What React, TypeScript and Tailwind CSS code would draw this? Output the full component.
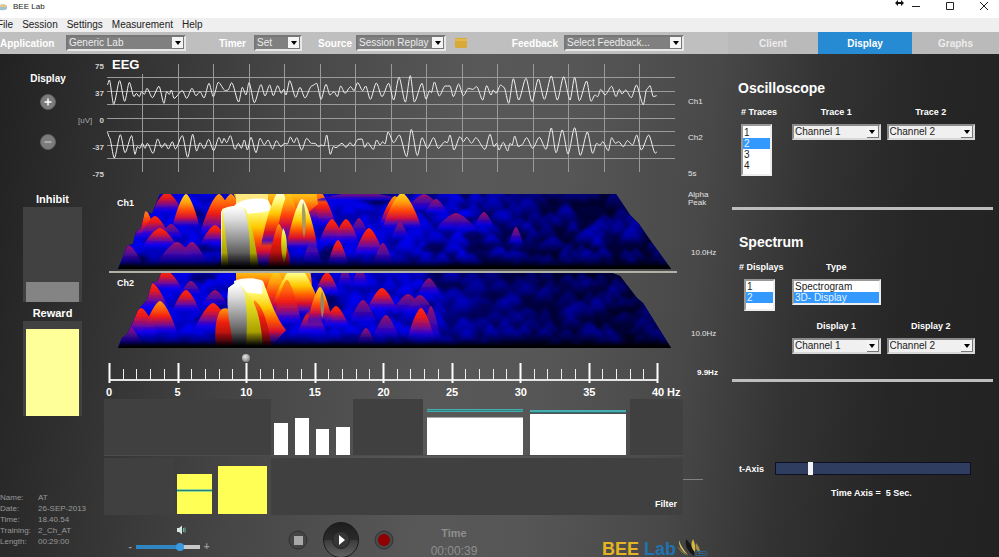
import { useState } from 'react';
import type { ReactNode } from 'react';

// turning points of the two EEG traces, x/y pairs in thirds of a pixel
const TRACE_1 = [
  322, 255, 328, 240, 341, 313, 359, 242, 374, 304, 388, 247, 402, 290, 409, 280, 418, 290, 425, 275, 433, 283, 441, 265,
  457, 293, 477, 259, 492, 310, 500, 275, 508, 283, 514, 270, 522, 295, 547, 272, 560, 295, 576, 265, 588, 287, 600, 275,
  612, 294, 627, 250, 640, 290, 655, 247, 676, 272, 684, 270, 695, 248, 716, 306, 727, 262, 738, 285, 747, 248, 763, 308,
  783, 254, 795, 288, 809, 255, 820, 287, 833, 257, 844, 280, 851, 268, 858, 285, 869, 242, 887, 292, 900, 262, 915, 294,
  935, 258, 950, 250, 963, 298, 978, 253, 990, 285, 1002, 275, 1012, 290, 1022, 258, 1035, 280, 1052, 260, 1062, 272,
  1073, 248, 1088, 272, 1097, 258, 1111, 298, 1129, 249, 1146, 290, 1166, 250, 1181, 300, 1197, 232, 1216, 306, 1231, 227,
  1243, 306, 1266, 250, 1278, 298, 1289, 272, 1294, 278, 1303, 246, 1318, 288, 1335, 258, 1350, 258, 1360, 290, 1376, 252,
  1390, 287, 1405, 265, 1418, 268, 1430, 260, 1448, 300, 1460, 257, 1473, 285, 1480, 270, 1488, 280, 1502, 255, 1512, 262,
  1526, 310, 1540, 236, 1556, 300, 1578, 235, 1596, 305, 1615, 237, 1633, 298, 1654, 228, 1672, 300, 1691, 230, 1710, 300,
  1724, 232, 1738, 302, 1760, 243, 1773, 304, 1785, 285, 1793, 290, 1802, 268, 1815, 285, 1835, 259, 1848, 290, 1858, 268,
  1866, 282, 1877, 270, 1894, 293, 1909, 255, 1930, 314, 1940, 268, 1950, 257, 1960, 290, 1970, 287,
];

const TRACE_2 = [
  322, 397, 328, 412, 343, 474, 361, 404, 375, 458, 395, 407, 405, 463, 412, 440, 420, 445, 427, 430, 435, 445, 442, 430,
  459, 460, 473, 417, 485, 443, 495, 430, 505, 447, 517, 425, 526, 447, 547, 407, 563, 472, 578, 403, 590, 453, 600, 428,
  612, 446, 626, 418, 641, 452, 657, 412, 666, 430, 672, 415, 680, 428, 691, 407, 705, 448, 715, 430, 724, 445, 733, 420,
  742, 450, 753, 412, 768, 458, 780, 415, 793, 435, 804, 420, 818, 447, 829, 422, 843, 440, 853, 430, 862, 432, 871, 411,
  882, 428, 890, 413, 905, 450, 920, 415, 934, 430, 945, 430, 955, 440, 965, 435, 972, 438, 980, 405, 991, 463, 1000, 440,
  1008, 443, 1026, 430, 1038, 442, 1050, 428, 1060, 438, 1074, 418, 1086, 417, 1094, 442, 1103, 428, 1120, 448, 1130, 420,
  1140, 435, 1148, 425, 1155, 432, 1164, 396, 1181, 428, 1198, 405, 1220, 470, 1234, 388, 1252, 467, 1266, 413, 1282, 445,
  1301, 413, 1315, 445, 1335, 425, 1342, 428, 1350, 405, 1362, 450, 1380, 410, 1390, 425, 1400, 412, 1415, 430, 1427, 413,
  1455, 448, 1470, 403, 1482, 440, 1490, 430, 1497, 450, 1510, 427, 1523, 453, 1530, 430, 1536, 436, 1544, 408, 1555, 440,
  1565, 435, 1580, 413, 1598, 445, 1618, 412, 1638, 448, 1654, 384, 1668, 458, 1687, 390, 1704, 462, 1724, 383, 1741, 466,
  1762, 396, 1778, 460, 1790, 430, 1800, 436, 1808, 425, 1825, 452, 1835, 413, 1846, 430, 1856, 425, 1870, 440, 1882, 422,
  1898, 435, 1910, 405, 1924, 450, 1946, 405, 1966, 460, 1971, 455,
];

function tracePath(pts: number[]) {
  let d = `M${pts[0] / 3} ${pts[1] / 3}`;
  for (let i = 2; i < pts.length; i += 2) {
    const x0 = pts[i - 2] / 3;
    const x1 = pts[i] / 3;
    const pull = (x1 - x0) * 0.28;
    d += `C${x0 + pull} ${pts[i - 1] / 3} ${x1 - pull} ${pts[i + 1] / 3} ${x1} ${pts[i + 1] / 3}`;
  }
  return d;
}

// [x, top, base, half width, heat]
type Peak = [number, number, number, number, 'purple' | 'red' | 'orange' | 'yellow' | 'white'];

const PEAKS_1: Peak[] = [
  [167, 192, 216, 17, 'red'],
  [318, 190, 229, 19, 'orange'],
  [306, 190, 225, 14, 'orange'],
  [424, 194, 213, 20, 'purple'],
  [436, 199, 215, 12, 'purple'],
  [360, 192, 202, 50, 'purple'],
  [395, 196, 228, 16, 'orange'],
  [402, 193, 230, 20, 'yellow'],
  [186, 194, 229, 14, 'yellow'],
  [219, 194, 238, 20, 'orange'],
  [231, 194, 238, 20, 'orange'],
  [171, 224, 240, 13, 'purple'],
  [456, 213, 232, 22, 'purple'],
  [484, 212, 228, 10, 'purple'],
  [359, 218, 238, 10, 'purple'],
  [145, 209, 242, 12, 'orange'],
  [155, 216, 240, 16, 'red'],
  [332, 219, 247, 14, 'red'],
  [346, 219, 247, 14, 'red'],
  [400, 222, 240, 9, 'purple'],
  [516, 227, 245, 7, 'purple'],
  [215, 225, 248, 16, 'red'],
  [160, 228, 250, 19, 'red'],
  [369, 228, 260, 16, 'red'],
  [312, 239, 266, 10, 'purple'],
  [338, 240, 268, 11, 'red'],
  [383, 243, 268, 11, 'purple'],
  [128, 245, 268, 16, 'purple'],
  [177, 242, 268, 22, 'purple'],
  [192, 242, 266, 16, 'purple'],
];

const PEAKS_2: Peak[] = [
  [166, 270, 294, 18, 'red'],
  [327, 272, 297, 13, 'red'],
  [345, 268, 288, 8, 'purple'],
  [360, 268, 288, 9, 'purple'],
  [429, 278, 297, 12, 'purple'],
  [152, 283, 314, 18, 'red'],
  [191, 281, 297, 12, 'purple'],
  [186, 290, 315, 15, 'red'],
  [215, 290, 308, 14, 'purple'],
  [382, 288, 315, 17, 'red'],
  [408, 294, 316, 18, 'purple'],
  [420, 295, 316, 16, 'purple'],
  [363, 300, 325, 14, 'purple'],
  [141, 308, 340, 18, 'red'],
  [160, 301, 336, 18, 'orange'],
  [213, 303, 334, 20, 'red'],
  [336, 306, 330, 14, 'red'],
  [312, 308, 338, 16, 'red'],
  [386, 315, 342, 14, 'purple'],
  [431, 306, 344, 10, 'purple'],
  [421, 308, 345, 15, 'red'],
  [366, 328, 347, 10, 'purple'],
  [128, 325, 350, 16, 'purple'],
];

const EDGE_1 = '118,269 121,262 127,246 133,244 136,232 141,228 145,211 152,214 160,194 616,194 630,215 639,224 650,240 671,269';
const EDGE_2 = '118,348 122,338 127,334 133,322 138,310 147,300 152,283 158,281 161,273 612,273 620,276 637,298 643,303 671,348';

function bell(x: number, top: number, base: number, w: number) {
  const knee = base - (base - top) * 0.5;
  return `M${x - w} ${base}C${x - w * 0.75} ${knee} ${x - w * 0.22} ${top} ${x} ${top}C${x + w * 0.22} ${top} ${x + w * 0.75} ${knee} ${x + w} ${base}Z`;
}

// low activity swell, brighter at the low frequencies
function swell(top: number, seed: number, limit: number, floor: number) {
  let s = seed;
  const rnd = () => {
    s = (s * 16807) % 2147483647;
    return s / 2147483647;
  };
  const out: { x: number; y: number; w: number; h: number; o: number; dark: boolean }[] = [];
  for (let row = 0; row < 8; row++) {
    const y = top + row * 10 - 3;
    for (let x = 108; x < 672; x += 18) {
      const fade = x < limit ? 1 : Math.max(floor, 1 - (x - limit) / 110);
      out.push({
        x: x + rnd() * 16,
        y: y + rnd() * 9 - 4,
        w: 10 + rnd() * 9,
        h: 14 + rnd() * 12,
        o: fade * (0.7 + rnd() * 0.3),
        dark: rnd() < (x < limit ? 0.1 : 0.25),
      });
    }
  }
  return out;
}

function Surface({ id, edge, top, peaks, seed, limit, floor, children }: {
  id: string;
  edge: string;
  top: number;
  peaks: Peak[];
  seed: number;
  limit: number;
  floor: number;
  children: ReactNode;
}) {
  return (
    <g clipPath={`url(#${id})`}>
      <clipPath id={id}>
        <polygon points={edge} />
      </clipPath>
      <rect x="110" y={top} width="570" height="76" fill="#000058" />
      <rect x="110" y={top} width="570" height="76" fill="url(#dusk)" />
      <g filter="url(#soft)">
        {swell(top, seed, limit, floor).map((b, i) =>
          b.dark ? (
            <ellipse key={i} cx={b.x} cy={b.y + 8} rx={b.w * 0.8} ry="5" fill="#000040" opacity="0.6" />
          ) : (
            <path key={i} d={bell(b.x, b.y, b.y + b.h, b.w)} fill="url(#h-blue)" opacity={b.o} />
          )
        )}
      </g>
      <g filter="url(#edge)">
        {peaks.map(([x, t, b, w, heat]) => (
          <path key={`${x}-${t}`} d={bell(x, t, b, w)} fill={FILLS[heat]} />
        ))}
        {children}
      </g>
      <rect x="110" y={top + 60} width="570" height="16" fill="url(#floor)" />
    </g>
  );
}

const FILLS = {
  purple: 'url(#h-purple)',
  red: 'url(#h-red)',
  orange: 'url(#h-orange)',
  yellow: 'url(#h-yellow)',
  white: 'url(#h-white)',
};

const HEAT: [string, [string, string, number][]][] = [
  ['h-blue', [['0%', '#0808fa', 1], ['45%', '#0000e4', 0.95], ['75%', '#0000a0', 0.6], ['100%', '#000060', 0]]],
  ['h-purple', [['0%', '#9c1468', 1], ['40%', '#5a0a96', 0.9], ['75%', '#1400e6', 0.7], ['100%', '#0000e0', 0]]],
  ['h-red', [['0%', '#ff2a10', 1], ['25%', '#e81a1a', 1], ['50%', '#8c0c80', 0.95], ['75%', '#1800f0', 0.8], ['100%', '#0000e0', 0]]],
  ['h-orange', [['0%', '#ff9a10', 1], ['24%', '#ff5a08', 1], ['45%', '#f01c14', 1], ['66%', '#8c0c80', 0.95], ['84%', '#1800f0', 0.75], ['100%', '#0000e0', 0]]],
  ['h-yellow', [['0%', '#ffd820', 1], ['25%', '#ffa00a', 1], ['48%', '#ff4408', 1], ['68%', '#d01040', 1], ['85%', '#4008c0', 0.8], ['100%', '#0000e0', 0]]],
  ['h-white', [['0%', '#ffffff', 1], ['22%', '#fff870', 1], ['42%', '#ffc800', 1], ['60%', '#ff5a00', 1], ['76%', '#d8102c', 1], ['90%', '#4008c8', 0.9], ['100%', '#0000e0', 0]]],
];

function Spectra() {
  return (
    <svg viewBox="104 188 584 162" preserveAspectRatio="none" className="block h-[162px] w-full" aria-label="3D spectrum">
      <defs>
        {HEAT.map(([id, stops]) => (
          <linearGradient key={id} id={id} x1="0" y1="0" x2="0" y2="1">
            {stops.map(([offset, color, alpha]) => (
              <stop key={offset} offset={offset} stopColor={color} stopOpacity={alpha} />
            ))}
          </linearGradient>
        ))}
        <linearGradient id="dusk" x1="0" y1="0" x2="1" y2="0">
          <stop offset="0" stopColor="#0000d4" />
          <stop offset="0.45" stopColor="#0000c4" stopOpacity="0.9" />
          <stop offset="0.75" stopColor="#000028" stopOpacity="0.7" />
          <stop offset="1" stopColor="#000010" />
        </linearGradient>
        <linearGradient id="floor" x1="0" y1="0" x2="0" y2="1">
          <stop offset="0" stopColor="#000010" stopOpacity="0" />
          <stop offset="0.5" stopColor="#000010" stopOpacity="0.4" />
          <stop offset="0.9" stopColor="#000" />
        </linearGradient>
        <linearGradient id="tower" x1="0" y1="0" x2="0" y2="1">
          <stop offset="0" stopColor="#fff" />
          <stop offset="0.2" stopColor="#dcdcdc" />
          <stop offset="0.55" stopColor="#8c8c8c" />
          <stop offset="1" stopColor="#1c1c1c" />
        </linearGradient>
        <linearGradient id="flank" x1="0" y1="0" x2="0" y2="1">
          <stop offset="0" stopColor="#fff8b0" />
          <stop offset="0.3" stopColor="#e8e020" />
          <stop offset="0.75" stopColor="#a8a000" />
          <stop offset="1" stopColor="#383400" />
        </linearGradient>
        <linearGradient id="ember" x1="0" y1="0" x2="0" y2="1">
          <stop offset="0" stopColor="#ff9a10" />
          <stop offset="0.35" stopColor="#f02010" />
          <stop offset="1" stopColor="#700010" />
        </linearGradient>
        <filter id="soft">
          <feGaussianBlur stdDeviation="1.5" />
        </filter>
        <filter id="edge">
          <feGaussianBlur stdDeviation="0.7" />
        </filter>
      </defs>

      <Surface id="surface1" edge={EDGE_1} top={193} peaks={PEAKS_1} seed={71} limit={450} floor={0.5}>
        <path d="M232 190H316L318 204L302 218L290 206L284 232L262 222L238 204Z" fill="url(#h-yellow)" />
        <path d="M240 199C252 197 262 197 268 200C274 212 284 226 292 268H244Z" fill="url(#h-white)" />
        <path d="M236 190H268V204L236 206Z" fill="#ffe880" />
        <path d={bell(280, 190, 246, 19)} fill="url(#h-white)" />
        <path d={bell(289, 192, 240, 13)} fill="url(#h-yellow)" />
        <path d={bell(302, 199, 250, 16)} fill="url(#h-white)" />
        <path d="M303 202C307 212 306 228 304 238C302 226 301 212 303 202Z" fill="#a89a60" />
        <path d={bell(279, 224, 268, 11)} fill="url(#ember)" />
        <path d="M283 228C288 236 288 252 284 264C281 254 280 240 283 228Z" fill="url(#flank)" />
        <path d="M221 269V212C222 208 230 206 234 206C240 198 262 197 268 200L270 210C262 214 254 212 248 214Z" fill="#fff" />
        <path d="M221 269L222 209C230 206 240 206 246 209C252 226 256 246 259 269Z" fill="url(#flank)" />
        <path d="M229 269L223 210C230 206 238 206 244 209C250 226 250 246 250 269Z" fill="url(#tower)" />
      </Surface>

      <Surface id="surface2" edge={EDGE_2} top={272} peaks={PEAKS_2} seed={1234} limit={410} floor={0.36}>
        <path d="M236 268H310L312 284L296 304L282 296L264 290L236 284Z" fill="url(#h-yellow)" />
        <path d={bell(276, 270, 318, 17)} fill="url(#h-yellow)" />
        <path d={bell(296, 264, 316, 27)} fill="url(#h-white)" />
        <path d={bell(287, 280, 328, 15)} fill="url(#h-orange)" />
        <path d={bell(320, 287, 325, 13)} fill="url(#h-yellow)" />
        <path d="M322 291C325 300 325 310 322 318C320 308 320 298 322 291Z" fill="#9a8460" />
        <path d="M234 281C244 277 258 278 263 281C270 300 276 318 286 330L270 348H240Z" fill="url(#h-white)" />
        <path d="M216 348C214 330 216 314 222 309C226 307 230 309 230 312L236 348Z" fill="url(#ember)" />
        <path d="M254 300C264 306 268 326 272 348H250Z" fill="url(#ember)" />
        <path d="M228 290C232 282 244 278 262 281L262 294L244 292Z" fill="#fff" />
        <path d="M234 348L228 288C234 283 242 283 246 292C256 302 261 318 263 348Z" fill="url(#flank)" />
        <path d="M234 348C230 326 226 308 228 290C232 282 240 282 244 292C248 310 247 330 246 348Z" fill="url(#tower)" />
      </Surface>

      <rect x="109" y="271" width="568" height="2" fill="#b0b2a8" />
    </svg>
  );
}

function Oscillogram() {
  const rows = [77, 91, 104, 118, 131, 145, 158];
  const cols = Array.from({ length: 15 }, (_, i) => 142 + Math.round(i * 35.5));
  return (
    <svg viewBox="104 54 584 134" preserveAspectRatio="none" className="block h-[134px] w-full" aria-label="EEG traces">
      {rows.map((y) => (
        <rect key={y} x="107" y={y} width="568" height="1" fill="#9a9a9a" />
      ))}
      {cols.map((x, i) => (
        <rect key={x} x={x} y={i === 0 ? 74 : 64} width="1" height={i === 0 ? 98 : 108} fill="#9a9a9a" />
      ))}
      <path d={tracePath(TRACE_1)} fill="none" stroke="#f2f2f2" />
      <path d={tracePath(TRACE_2)} fill="none" stroke="#f2f2f2" />
    </svg>
  );
}

function Ruler() {
  return (
    <svg viewBox="109 350 549 36" preserveAspectRatio="none" className="block h-[36px] w-full overflow-visible" aria-hidden="true">
      <defs>
        <radialGradient id="ball" cx="0.4" cy="0.35" r="0.6">
          <stop offset="0" stopColor="#e8e8e8" />
          <stop offset="1" stopColor="#8a8a8a" />
        </radialGradient>
      </defs>
      <rect x="109" y="379" width="549" height="2" fill="#e4e4e4" />
      {Array.from({ length: 41 }, (_, i) => {
        const x = 109 + Math.round(i * 13.7);
        return i % 5 === 0 ? (
          <rect key={i} x={x - 0.5} y="363" width="2" height="20" fill="#fff" />
        ) : (
          <rect key={i} x={x} y="369" width="1" height="11" fill="#f0f0f0" />
        );
      })}
      <circle cx="246" cy="358" r="4" fill="url(#ball)" />
    </svg>
  );
}

function DropDown({ label, value, dark, className }: { label: string; value: string; dark?: boolean; className: string }) {
  return (
    <div className={`relative h-4 shrink-0 ${className}`}>
      <select
        aria-label={label}
        defaultValue={value}
        className={`block h-full w-full appearance-none border-2 pr-3 pl-px text-[10px] leading-3 outline-none ${
          dark
            ? 'border-t-[#777] border-r-[#e8e8e8] border-b-[#e8e8e8] border-l-[#777] bg-[#808080] text-[#ececec]'
            : 'border-t-[#8a8a8a] border-r-[#d8d8d8] border-b-[#d8d8d8] border-l-[#8a8a8a] bg-[#f0f0f0] text-[#222]'
        }`}
      >
        <option>{value}</option>
      </select>
      <span className="pointer-events-none absolute top-0.5 right-0.5 flex h-3 w-3 items-center justify-center border-r border-b border-[#777] bg-[#f4f4f4]">
        <svg viewBox="0 0 6 4" className="h-1 w-1.5">
          <path d="M0 0H6L3 4Z" fill="#000" />
        </svg>
      </span>
    </div>
  );
}

function ListBox({ label, options, value, className }: { label: string; options: string[]; value: string; className: string }) {
  return (
    <select
      aria-label={label}
      size={options.length}
      defaultValue={value}
      className={`block overflow-hidden border-2 border-t-[#999] border-r-[#eee] border-b-[#eee] border-l-[#999] bg-white bg-none p-0 text-[10px] text-[#222] outline-none ${className}`}
    >
      {options.map((o) => (
        <option
          key={o}
          className="h-[11px] min-h-0 p-0 pl-px leading-[11px] checked:bg-[linear-gradient(#3399ff,#3399ff)] checked:[-webkit-text-fill-color:#e8f4ff]"
        >
          {o}
        </option>
      ))}
    </select>
  );
}

function Level({ label, fill }: { label: string; fill: string }) {
  return (
    <section className="pt-1">
      <h2 className="text-center text-[11px] leading-[15px] font-bold">{label}</h2>
      <div className="flex h-[95px] items-end bg-[#414141] px-[3px]">
        <div className={`w-full ${fill}`} />
      </div>
    </section>
  );
}

function TitleBar() {
  return (
    <header className="flex h-[18px] items-start justify-between bg-white text-[#222]">
      <div className="flex items-center">
        <svg viewBox="0 0 8 8" className="h-2 w-2" aria-hidden="true">
          <path d="M0 2Q4 0 7 3V6Q4 8 0 7Z" fill="#9fc3cf" />
          <path d="M0 2Q4 0 7 3L6 4H0Z" fill="#e6c78a" />
        </svg>
        <h1 className="pl-[5px] text-[8px] leading-[13px]">BEE Lab</h1>
      </div>
      <div className="flex items-start">
        <svg viewBox="0 0 9 6" className="mr-[7px] h-1.5 w-[9px]" aria-hidden="true">
          <path d="M0 3L3 0V2H6V0L9 3L6 6V4H3V6Z" fill="#111" />
        </svg>
        <button type="button" aria-label="Minimize" className="mr-6 flex h-3 w-2.5 items-center">
          <svg viewBox="0 0 10 12" className="h-3 w-2.5"><path d="M1 6.500H9" stroke="#222" /></svg>
        </button>
        <button type="button" aria-label="Maximize" className="mr-6 flex h-3 w-2.5 items-center">
          <svg viewBox="0 0 10 12" className="h-3 w-2.5"><path d="M1.500 2.500H8.500V9.500H1.500Z" fill="none" stroke="#222" /></svg>
        </button>
        <button type="button" aria-label="Close" className="mr-2.5 flex h-3 w-2.5 items-center">
          <svg viewBox="0 0 10 12" className="h-3 w-2.5"><path d="M1 2L9 10M9 2L1 10" stroke="#222" /></svg>
        </button>
      </div>
    </header>
  );
}

function Toolbar() {
  const [tab, setTab] = useState('Display');
  return (
    <div className="flex h-[22px] bg-[#bfbfbf] text-[10px] font-bold text-white">
      <div className="flex min-w-0 flex-1 items-center">
        <span className="w-[66px] shrink-0">Application</span>
        <DropDown dark label="Application" value="Generic Lab" className="w-[120px] font-normal" />
        <span className="w-[68px] shrink-0 pr-2 text-right">Timer</span>
        <DropDown dark label="Timer" value="Set" className="w-12 font-normal" />
        <span className="w-[54px] shrink-0 pr-1 text-right">Source</span>
        <DropDown dark label="Source" value="Session Replay" className="w-[90px] font-normal" />
        <button type="button" aria-label="Open file" className="ml-2 shrink-0">
          <svg viewBox="0 0 14 12" className="h-3 w-3.5">
            <path d="M1 2Q1 1 2 1H12Q13 1 13 2V10Q13 11 12 11H2Q1 11 1 10Z" fill="#d9a93a" />
            <path d="M1 3H13" stroke="#edc766" />
          </svg>
        </button>
        <span className="w-[96px] shrink-0 pr-1.5 text-right">Feedback</span>
        <DropDown dark label="Feedback" value="Select Feedback..." className="w-[120px] font-normal" />
      </div>
      <div className="grid w-[271px] shrink-0 grid-cols-[90px_94px_1fr] bg-[#bababa]">
        {['Client', 'Display', 'Graphs'].map((t) => (
          <button
            key={t}
            type="button"
            onClick={() => setTab(t)}
            className={tab === t ? 'bg-[#268bd2] text-white' : 'text-[#ececec]'}
          >
            {t}
          </button>
        ))}
      </div>
    </div>
  );
}

function Filters() {
  return (
    <div className="flex flex-col gap-0.5 pt-px">
      <div className="grid h-[57px] grid-cols-[167fr_82fr_70fr_207fr_53fr] border-b border-[#4c4c4c]">
        <div className="bg-[#404040]" />
        <div className="flex items-end gap-[7px] px-[3px]">
          <div className="h-8 flex-1 bg-white" />
          <div className="h-[37px] flex-1 bg-white" />
          <div className="h-[26px] flex-1 bg-white" />
          <div className="h-7 flex-1 bg-white" />
        </div>
        <div className="bg-[#404040]" />
        <div className="flex items-end gap-[7px] px-1">
          <div className="flex-1">
            <div className="mb-[5px] h-[3px] border-y border-[#46aeae] bg-[#2f7f7f]" />
            <div className="h-[38px] border-t border-[#aaa] bg-white" />
          </div>
          <div className="flex-1">
            <div className="mb-px h-[3px] border-t-2 border-[#46aeae] bg-[#2f6f6f]" />
            <div className="h-[41px] bg-white" />
          </div>
        </div>
        <div className="bg-[#404040]" />
      </div>
      <div className="grid h-[57px] grid-cols-[70fr_97fr_412fr]">
        <div className="bg-[#404040]" />
        <div className="flex items-end gap-1.5 pr-1 pb-px pl-[3px]">
          <div className="h-10 flex-[35] bg-[#ffff55] pt-[15px]">
            <div className="h-[3px] border-y border-[#8fd890] bg-[#2a8078]" />
          </div>
          <div className="h-12 flex-[49] bg-[#ffff55]" />
        </div>
        <div className="flex items-center justify-end bg-[#404040] pt-9 pr-1.5 text-[9px] font-bold">Filter</div>
      </div>
    </div>
  );
}

function Transport() {
  return (
    <footer className="flex h-[42px] items-start">
      <div className="flex w-[110px] flex-col items-center pt-2.5 pl-5">
        <svg viewBox="0 0 10 10" className="ml-6 h-2.5 w-2.5" aria-hidden="true">
          <path d="M1 3H3L6 0.500V9.500L3 7H1Z" fill="#d8e4dc" />
          <path d="M7.500 3V7M9 2.500V7.500" stroke="#6fb49c" />
        </svg>
        <div className="mt-1.5 flex items-center gap-1 text-[10px] leading-3 font-bold text-[#999]">
          <span>-</span>
          <input
            type="range"
            aria-label="Volume"
            defaultValue={72}
            className="h-1 w-16 appearance-none bg-[linear-gradient(90deg,#2f86c0_70%,#c8c8c8_70%)] [&::-webkit-slider-thumb]:size-2 [&::-webkit-slider-thumb]:appearance-none [&::-webkit-slider-thumb]:rounded-full [&::-webkit-slider-thumb]:bg-[#3a9ae0]"
          />
          <span>+</span>
        </div>
      </div>
      <div className="flex h-[50px] items-center gap-[14px] pl-[74px]">
        <button type="button" aria-label="Stop">
          <svg viewBox="0 0 20 20" className="h-5 w-5">
            <circle cx="10" cy="10" r="9" fill="#454545" stroke="#303030" />
            <rect x="6" y="6" width="9" height="9" fill="#a8a8a8" />
          </svg>
        </button>
        <button type="button" aria-label="Play">
          <svg viewBox="0 0 38 38" className="h-[38px] w-[38px]">
            <defs>
              <linearGradient id="knob" x1="0" y1="0" x2="0" y2="1">
                <stop offset="0" stopColor="#1c1c1c" />
                <stop offset="0.5" stopColor="#2c2c2c" />
                <stop offset="0.52" stopColor="#3e3e3e" />
                <stop offset="1" stopColor="#626262" />
              </linearGradient>
            </defs>
            <circle cx="19" cy="19" r="17.500" fill="url(#knob)" stroke="#1a1a1a" />
            <circle cx="19" cy="19" r="8.500" fill="#363636" stroke="#242424" />
            <path d="M17 14L23 19L17 24Z" fill="#fff" />
          </svg>
        </button>
        <button type="button" aria-label="Record">
          <svg viewBox="0 0 20 20" className="h-5 w-5">
            <circle cx="10" cy="10" r="9" fill="#484848" stroke="#343434" />
            <circle cx="10" cy="10" r="6" fill="#900000" />
          </svg>
        </button>
      </div>
      <div className="w-[120px] pt-[9px] text-center text-[#8e8e8e]">
        <p className="text-[11px] leading-[18px] font-bold">Time</p>
        <p className="text-[12px] leading-[18px]">00:00:39</p>
      </div>
      <div className="ml-auto flex pt-6 pr-5">
        <span className="text-[18px] leading-[20px] font-bold whitespace-nowrap text-[#e6b422]">
          BEE <span className="text-[#1f73b0]">Lab</span>
        </span>
        <svg viewBox="0 0 36 18" className="h-[18px] w-9" aria-hidden="true">
          <path d="M3 1Q2 10 12 16Q5 8 3 1Z" fill="#d8c060" />
          <path d="M1 6Q4 14 12 17Q4 11 1 6Z" fill="#8a8040" />
          <path d="M10 0Q8 10 18 17Q20 10 10 0Z" fill="#151515" />
          <path d="M17 0Q13 8 19 13Q20 6 17 0Z" fill="#d8b840" />
          <path d="M20 4Q18 10 24 14Q24 8 20 4Z" fill="#a09048" />
          <path d="M20 12.500H29Q31 12.500 31 14.500T29 16.500H20Z" fill="none" stroke="#2c6084" />
          <path d="M22 14.500H29" stroke="#2c6084" />
        </svg>
      </div>
    </footer>
  );
}

function Field({ label, children }: { label: string; children: ReactNode }) {
  return (
    <div>
      <div className="mb-1.5 text-center text-[9px] leading-3 font-bold whitespace-nowrap">{label}</div>
      {children}
    </div>
  );
}

function Settings() {
  return (
    <aside className="w-[267px] shrink-0 pr-1.5">
      <section className="h-[156px] border-b-[3px] border-[#bdbdbd] pt-6 pl-1.5">
        <h2 className="text-[14px] leading-5 font-bold">Oscilloscope</h2>
        <div className="flex gap-3 pt-2">
          <div className="w-[42px]">
            <Field label="# Traces">
              <ListBox label="Number of traces" options={['1', '2', '3', '4']} value="2" className="ml-[3px] h-[52px] w-[31px] pt-px" />
            </Field>
          </div>
          <div className="grid w-[183px] grid-cols-2 gap-1.5">
            <Field label="Trace 1">
              <DropDown label="Trace 1" value="Channel 1" className="w-full" />
            </Field>
            <Field label="Trace 2">
              <DropDown label="Trace 2" value="Channel 2" className="w-full" />
            </Field>
          </div>
        </div>
      </section>
      <section className="h-[172px] border-b-[3px] border-[#bdbdbd] pt-[22px] pl-[7px]">
        <h2 className="text-[14px] leading-5 font-bold">Spectrum</h2>
        <div className="flex gap-[11px] pt-[9px]">
          <div className="w-[42px]">
            <Field label="# Displays">
              <ListBox label="Number of displays" options={['1', '2']} value="2" className="ml-[5px] h-[32px] w-[31px]" />
            </Field>
          </div>
          <div className="grid w-[183px] grid-cols-2 gap-x-1.5 gap-y-[15px]">
            <Field label="Type">
              <ListBox label="Type" options={['Spectrogram', '3D- Display']} value="3D- Display" className="h-[26px] w-full" />
            </Field>
            <span />
            <Field label="Display 1">
              <DropDown label="Display 1" value="Channel 1" className="w-full" />
            </Field>
            <Field label="Display 2">
              <DropDown label="Display 2" value="Channel 2" className="w-full" />
            </Field>
          </div>
        </div>
      </section>
      <section className="pt-20 pl-[7px] text-[9px] leading-3 font-bold">
        <label className="flex items-center">
          <span className="w-9">t-Axis</span>
          <input
            type="range"
            defaultValue={17}
            className="h-[13px] w-[196px] appearance-none border border-[#0c1020] bg-[#2f3e60] [&::-webkit-slider-thumb]:h-[13px] [&::-webkit-slider-thumb]:w-[5px] [&::-webkit-slider-thumb]:appearance-none [&::-webkit-slider-thumb]:bg-[#f4f4f4]"
          />
        </label>
        <p className="pt-3 pl-[92px]">Time Axis =&nbsp; 5 Sec.</p>
      </section>
    </aside>
  );
}

const INFO = [
  ['Name:', 'AT'],
  ['Date:', '26-SEP-2013'],
  ['Time:', '18.40.54'],
  ['Training:', '2_Ch_AT'],
  ['Length:', '00:29:00'],
];

export default function App() {
  return (
    <div className="flex min-h-screen flex-col overflow-hidden bg-[#2a2a2a] font-['Liberation_Sans',Arial,sans-serif] text-white">
      <TitleBar />
      <nav className="-ml-[3px] flex h-[14px] items-center gap-[9px] bg-[#efefef] text-[10px] leading-none text-[#222]">
        {['File', 'Session', 'Settings', 'Measurement', 'Help'].map((m) => (
          <button key={m} type="button">{m}</button>
        ))}
      </nav>
      <Toolbar />
      <main className="flex flex-1 bg-[linear-gradient(97deg,#222222_0%,#2f2f2f_10%,#464646_27%,#585858_45%,#565656_55%,#484848_68%,#333333_78%,#262626_88%,#222222_100%)]">
        <div className="min-w-0 flex-1">
          <div className="flex">
            <div className="flex w-[76px] shrink-0 flex-col items-center pt-[18px] pl-[20px]">
              <h2 className="text-[10px] leading-[14px] font-bold">Display</h2>
              {['+', '-'].map((s) => (
                <button key={s} type="button" aria-label={s === '+' ? 'Zoom in' : 'Zoom out'} className="mt-2 mb-4 h-4 w-4">
                  <svg viewBox="0 0 16 16" className="h-4 w-4">
                    <circle cx="8" cy="8" r="7.500" fill="#7c7c7c" stroke="#606060" />
                    <path d={s === '+' ? 'M4.500 8H11.500M8 4.500V11.500' : 'M4.500 8H11.500'} stroke={s === '+' ? '#fff' : '#bbb'} strokeWidth="1.500" />
                  </svg>
                </button>
              ))}
            </div>
            <div className="flex w-7 shrink-0 flex-col justify-between py-2 text-right text-[8px] leading-[10px] font-bold text-[#d0d0d0]">
              <span>75</span>
              <span>37</span>
              <span className="flex justify-between pl-0.5">
                <span className="font-normal text-[#aaa]">[uV]</span>0
              </span>
              <span>-37</span>
              <span>-75</span>
            </div>
            <div className="relative min-w-0 flex-1">
              <Oscillogram />
              <h2 className="absolute top-1 left-2 text-[13px] leading-[14px] font-bold">EEG</h2>
            </div>
            <div className="flex w-11 shrink-0 flex-col gap-[26px] pt-[43px] text-[8px] leading-[10px] text-[#e4e4e4]">
              <span>Ch1</span>
              <span>Ch2</span>
              <span>5s</span>
            </div>
          </div>

          <div className="flex">
            <div className="w-[104px] shrink-0">
              <div className="mr-[22px] ml-[23px]">
                <Level label="Inhibit" fill="h-5 bg-[#848484]" />
                <Level label="Reward" fill="h-[87px] bg-[#ffff99]" />
              </div>
              <dl className="grid grid-cols-[38px_1fr] pt-[76px] text-[8px] leading-[11px] whitespace-nowrap text-[#999]">
                {INFO.map(([k, v]) => (
                  <div key={k} className="contents">
                    <dt>{k}</dt>
                    <dd>{v}</dd>
                  </div>
                ))}
              </dl>
            </div>

            <div className="min-w-0 flex-1">
              <div className="flex">
                <div className="relative min-w-0 flex-1">
                  <Spectra />
                  <span className="absolute top-[10px] left-[13px] text-[9px] leading-[10px] font-bold">Ch1</span>
                  <span className="absolute top-[90px] left-[13px] text-[9px] leading-[10px] font-bold">Ch2</span>
                </div>
                <div className="w-11 shrink-0 pt-[3px] text-[8px] leading-[8px] text-[#e4e4e4]">
                  <p>Alpha<br />Peak</p>
                  <p className="pt-[42px] pl-[3px]">10.0Hz</p>
                  <p className="pt-[73px] pl-[3px]">10.0Hz</p>
                </div>
              </div>
              <div className="flex">
                <div className="min-w-0 flex-1 pr-[30px] pl-[5px]">
                  <Ruler />
                  <div className="flex justify-between text-[11px] leading-3 font-bold">
                    {[0, 5, 10, 15, 20, 25, 30, 35, 40].map((n) => (
                      <span key={n} className="flex w-0 justify-center">{n}</span>
                    ))}
                  </div>
                </div>
                <div className="relative w-11 shrink-0">
                  <p className="pt-[18px] pl-[9px] text-[8px] leading-[10px] font-bold">9.9Hz</p>
                  <span className="absolute top-9 -left-[21px] text-[11px] leading-3 font-bold">Hz</span>
                </div>
              </div>
              <div className="flex">
                <div className="min-w-0 flex-1">
                  <Filters />
                </div>
                <div className="w-[49px] shrink-0 pt-[81px]">
                  <div className="h-px w-5 bg-[#808080]" />
                </div>
              </div>
              <Transport />
            </div>
          </div>
        </div>
        <Settings />
      </main>
    </div>
  );
}
